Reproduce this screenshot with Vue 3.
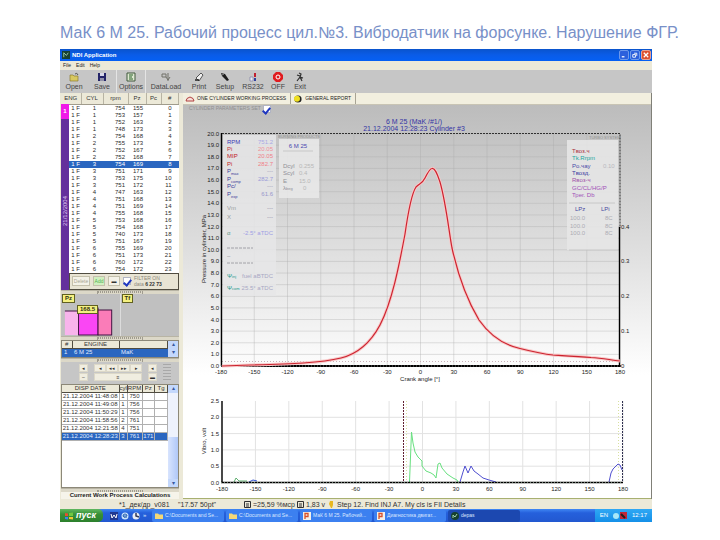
<script setup>
import { ref } from 'vue'

const rpm = [754, 753, 752, 748, 754, 755, 752, 752, 754, 751, 753, 751, 747, 751, 751, 755, 753, 754, 740, 751, 755, 751, 760, 754]
const pz = [155, 157, 163, 173, 168, 173, 167, 168, 169, 171, 175, 172, 163, 168, 169, 168, 168, 168, 173, 167, 169, 173, 172, 172]
const cycles = rpm.map((r, i) => ({ id: i, cyl: Math.floor(i / 4) + 1, rpm: r, pz: pz[i] }))
const selectedCycle = ref(8)

const records = [
  { date: '21.12.2004 11:48:08', cyl: 1, rpm: 750 },
  { date: '21.12.2004 11:49:08', cyl: 1, rpm: 756 },
  { date: '21.12.2004 11:50:29', cyl: 1, rpm: 756 },
  { date: '21.12.2004 11:58:56', cyl: 2, rpm: 761 },
  { date: '21.12.2004 12:21:58', cyl: 4, rpm: 751 },
  { date: '21.12.2004 12:28:23', cyl: 3, rpm: 761, p: '171' },
]
const selectedRecord = ref(5)

const tools = ['Open', 'Save', 'Options', 'DataLoad', 'Print', 'Setup', 'RS232', 'OFF', 'Exit']
const tasks = ['C:\\Documents and Se...', 'C:\\Documents and Se...', 'МаК 6 М 25. Рабочий...', 'Диагностика двигат...', 'depas']

const showLegend = ref(true)
const filterOn = ref(true)

const degrees = Array.from({ length: 13 }, (_, i) => -180 + i * 30)
const topX = (d) => 220 + ((d + 180) / 360) * 399
const lowX = (d) => 221 + ((d + 180) / 360) * 401
const pressures = Array.from({ length: 21 }, (_, i) => i)
const topY = (p) => 366 - p * 11.62
const volts = [0, 0.5, 1, 1.5, 2, 2.5]
const lowY = (v) => 482.5 - v * 32.6

const left = [
  { n: 'RPM', v: '751.2', y: 144, c: '#3a3ab4', k: '#a8a8e4' },
  { n: 'Pi', v: '20.05', y: 151, c: '#c03040', k: '#f09098' },
  { n: 'MIP', v: '20.05', y: 158, c: '#c01828', k: '#f08088' },
  { n: 'Pi', v: '282.7', y: 166, c: '#c01828', k: '#f08088' },
  { n: 'P', s: 'max', v: '---', y: 173, c: '#3a3a9a', k: '#a0a0b8' },
  { n: 'P', s: 'comp', v: '282.7', y: 181, c: '#3a3a9a', k: '#9c9cd8' },
  { n: 'Pc/', v: '---', y: 188, c: '#3a3a9a', k: '#a0a0b8' },
  { n: 'P', s: 'exp', v: '61.6', y: 196, c: '#3a3a9a', k: '#9898cc' },
  { n: 'Vm', v: '---', y: 210, c: '#98a0a0', k: '#9090a8' },
  { n: 'X', v: '---', y: 219, c: '#98a0a0', k: '#9090a8' },
  { n: 'α', v: '-2.5° aTDC', y: 235, c: '#609888', k: '#a0a0e4' },
]
const right = [
  { t: 'Tвоз.ч', y: 153, c: '#a83040' },
  { t: 'Tk.Rrpm', y: 160, c: '#20a8a0' },
  { t: 'Po.чау', y: 168, c: '#4848a8' },
  { t: 'Tвозд.', y: 175, c: '#3a3aa0' },
  { t: 'Rвоз-ч', y: 182, c: '#a050a8' },
  { t: 'GC/CL/HG/P', y: 190, c: '#a050b8' },
  { t: 'Трег. Db', y: 197, c: '#a050b8' },
]
</script>

<template>
  <main class="slide">
    <h1>МаК 6 М 25. Рабочий процесс цил.№3. Вибродатчик на форсунке. Нарушение ФГР.</h1>

    <section class="screen">
      <header class="titlebar">
        <svg class="appicon" viewBox="0 0 9 9"><rect width="9" height="9" fill="#17412f" /><path d="M2 7V2l3 3 2-3" stroke="#9fd0b0" fill="none" /></svg>
        <span>NDI Application</span>
        <div class="winbtns">
          <button aria-label="Minimize"><svg viewBox="0 0 9 9"><path d="M2 6.5h3" stroke="#fff" stroke-width="1.4" /></svg></button>
          <button aria-label="Restore"><svg viewBox="0 0 9 9"><path d="M3.5 2.5h3v3M2 4h3v3H2z" stroke="#fff" fill="none" /></svg></button>
          <button class="close" aria-label="Close"><svg viewBox="0 0 9 9"><path d="M2 2l5 5M7 2L2 7" stroke="#fff" stroke-width="1.4" /></svg></button>
        </div>
      </header>

      <nav class="menu">
        <a href="#file">File</a><a href="#edit">Edit</a><a href="#help">Help</a>
      </nav>

      <div class="toolbar">
        <button v-for="(t, i) in tools" :key="t" :class="{ sep: i === 2 }">
          <svg viewBox="0 0 12 10">
            <g v-if="i === 0"><path d="M2 3h3l1 1h4v5H2z" fill="#d8c860" stroke="#8c7c30" stroke-width=".7" /><path d="M7 2q2-2 3 1" stroke="#555" fill="none" /></g>
            <g v-else-if="i === 1"><path d="M2 1h8v8H2z" fill="#242468" /><path d="M4 1h4v3H4z" fill="#d8d8e8" /><path d="M4 6h4v3H4z" fill="#9090a8" /></g>
            <g v-else-if="i === 2"><path d="M2 1h8v8H2z" fill="#dde8d0" stroke="#40583c" /><path d="M4 3h4M4 5h3M4 7h4" stroke="#286028" /></g>
            <g v-else-if="i === 3"><path d="M2 2h4v3H2zM8 1v8M6 5l2 3 2-3" fill="none" stroke="#707068" /></g>
            <g v-else-if="i === 4"><path d="M3 6l5-5 2 2-4 6z" fill="#f0f0f0" stroke="#555" /><path d="M2 8h4" stroke="#222" stroke-width="1.5" /></g>
            <g v-else-if="i === 5"><path d="M2 1l4 1 4 6-2 1-5-5z" fill="#1c1c1c" /><path d="M3 3l2-1" stroke="#888" /></g>
            <g v-else-if="i === 6"><path d="M3 5h3v4H3z" fill="#e8e8f0" stroke="#7070a0" stroke-width=".6" /><path d="M8 1v4" stroke="#c02030" stroke-width="2" /><path d="M8 6v3" stroke="#3040a0" stroke-width="2" /></g>
            <g v-else-if="i === 7"><path d="M4 0h4l3 3v4l-3 3H4L1 7V3z" fill="#e01c20" /><circle cx="6" cy="5" r="2" fill="none" stroke="#fff" /></g>
            <g v-else><path d="M5 1l2 1-1 3 3 1M6 5L3 9M6 5l2 4M3 3l3 1" stroke="#303030" fill="none" stroke-width="1.2" /></g>
          </svg>
          <span>{{ t }}</span>
        </button>
      </div>

      <div class="work">
        <aside class="side">
          <div class="cyclebox">
            <div class="strip"><b>1</b><i>21/12/2004</i></div>
            <table class="cycles">
              <thead><tr><th>ENG</th><th>CYL</th><th>rpm</th><th>Pz</th><th>Pc</th><th>#</th></tr></thead>
              <tbody>
                <tr v-for="c in cycles" :key="c.id" :class="{ on: c.id === selectedCycle }" @click="selectedCycle = c.id">
                  <td>1 F</td><td>{{ c.cyl }}</td><td>{{ c.rpm }}</td><td>{{ c.pz }}</td><td></td><td>{{ c.id }}</td>
                </tr>
              </tbody>
            </table>
            <div class="filter">
              <button class="pale">Delete</button>
              <button class="green">Add</button>
              <button>▬</button>
              <label><input v-model="filterOn" type="checkbox" /><span>FILTER ON<br />data <b>6 22 73</b></span></label>
            </div>
          </div>
          <div class="grip"><i></i></div>

          <div class="bars">
            <div class="cell">
              <b class="tag">Pz</b>
              <svg viewBox="0 0 60 42" preserveAspectRatio="none">
                <rect x="4" y="17" width="14" height="24" fill="#f8b4ec" />
                <rect x="18" y="14" width="20" height="27" fill="#fa46f4" stroke="#401040" />
                <rect x="38" y="16" width="14" height="25" fill="#fa7cb8" stroke="#401040" />
                <path d="M4 17h14" stroke="#401040" />
              </svg>
              <b class="tag mean">168.5</b>
            </div>
            <div class="cell"><b class="tag">Tf</b></div>
          </div>
          <div class="grip"><i></i></div>

          <div class="listrow">
            <table class="engines">
              <thead><tr><th>#</th><th>ENGINE</th><th></th></tr></thead>
              <tbody><tr class="on"><td>1</td><td>6 M 25</td><td>MaK</td></tr></tbody>
            </table>
            <div class="scroll"><button aria-label="Up">▴</button><button aria-label="Down">▾</button></div>
          </div>
          <div class="grip"><i></i></div>

          <div class="player">
            <div class="stack"><button>◂</button><button>–</button></div>
            <div class="center">
              <div class="keys"><button>◂</button><button>◂◂</button><button>▸▸</button><button>▸</button></div>
              <button class="wide">≡</button>
            </div>
            <div class="stack"><button>◂</button><button>▬</button></div>
            <div class="hatch"></div>
          </div>

          <div class="listrow recbox">
            <table class="records">
              <thead><tr><th>DISP DATE</th><th>cyl</th><th>RPM</th><th>Pz</th><th>Tg</th></tr></thead>
              <tbody>
                <tr v-for="(r, i) in records" :key="r.date" :class="{ on: i === selectedRecord }" @click="selectedRecord = i">
                  <td>{{ r.date }}</td><td>{{ r.cyl }}</td><td>{{ r.rpm }}</td><td>{{ r.p }}</td><td></td>
                </tr>
              </tbody>
            </table>
            <div class="scroll"><button aria-label="Up">▴</button><span class="thumb"></span><button aria-label="Down">▾</button></div>
          </div>
          <div class="grip"><i></i></div>
          <div class="caption">Current Work Process Calculations</div>
        </aside>

        <section class="content">
          <div class="tabs">
            <button class="active">
              <svg viewBox="0 0 10 8"><path d="M1 6q0-3 4-4 4 1 4 4z" fill="#f8e0d8" stroke="#b04040" /></svg>
              ONE CYLINDER WORKING PROCESS
            </button>
            <button>
              <svg viewBox="0 0 10 8"><circle cx="5" cy="4" r="3.6" fill="#222" /><circle cx="4" cy="3.7" r="3" fill="#f0e020" /></svg>
              GENERAL REPORT
            </button>
          </div>

          <div class="pane">
            <label class="show"><span>CYLINDER PARAMETERS SET</span><input v-model="showLegend" type="checkbox" /></label>

            <svg class="plot" viewBox="182 112 468 276">
              <g class="ttl"><text x="413" y="124">6 M 25 (MaK /#1/)</text><text x="413" y="131">21.12.2004 12:28:23 Cylinder #3</text></g>
              <g stroke="#a8a8a8" stroke-opacity=".35">
                <path v-for="p in pressures" :key="p" :d="`M221 ${topY(p)}H619`" />
                <path v-for="d in degrees" :key="d" :d="`M${topX(d)} 134V366`" />
              </g>
              <g v-if="showLegend">
                <rect x="222" y="135" width="53" height="161" fill="#e6e6e8" opacity=".85" />
                <rect x="278" y="139" width="40" height="59" fill="#e8e8e8" opacity=".9" />
                <rect x="566" y="140" width="51" height="110" fill="#e6e6e6" opacity=".9" />
                <g v-for="l in left" :key="l.y" class="lg">
                  <text x="226" :y="l.y" :fill="l.c">{{ l.n }}<tspan v-if="l.s" dy="2" class="sub">{{ l.s }}</tspan></text>
                  <text x="272" :y="l.y" :fill="l.k" text-anchor="end">{{ l.v }}</text>
                </g>
                <path d="M226 248h26M226 263h26" stroke="#909098" stroke-dasharray="3 1" stroke-width=".8" />
                <g class="lg">
                  <text x="226" y="258" fill="#909098">–</text>
                  <text x="226" y="278" fill="#20988c">Ψ<tspan class="sub">inj</tspan></text><text x="272" y="278" fill="#a8a8c4" text-anchor="end">fuel aBTDC</text>
                  <text x="226" y="290" fill="#20988c">Ψ<tspan class="sub">com</tspan></text><text x="272" y="290" fill="#a8a8c4" text-anchor="end">25.5° aTDC</text>
                </g>
                <text x="277" y="138" class="tiny" fill="#909090">BURNING PRODUCTS</text>
                <g class="lg">
                  <text x="297" y="148" fill="#4848b0" text-anchor="middle">6 M 25</text>
                  <text x="282" y="168" fill="#909098">Dcyl</text><text x="298" y="168" fill="#b8b8b8">0.255</text>
                  <text x="282" y="175" fill="#909098">Scyl</text><text x="298" y="175" fill="#b8b8b8">0.4</text>
                  <text x="282" y="183" fill="#909098">E</text><text x="298" y="183" fill="#b8b8b8">15.0</text>
                  <text x="282" y="190" fill="#909098">λ<tspan class="sub">beg</tspan></text><text x="302" y="190" fill="#b8b8b8">0</text>
                </g>
                <path d="M282 151h30M568 203h46M568 250h50" stroke="#c0c0c0" stroke-width=".8" />
                <text x="588" y="139" class="tiny" fill="#909090">TURBO SYSTEM</text>
                <g class="lg">
                  <text v-for="r in right" :key="r.y" x="571" :y="r.y" :fill="r.c">{{ r.t }}</text>
                  <text x="602" y="168" fill="#b8b8c0">0.10</text>
                  <text x="574" y="211" fill="#4848a0">LPz</text><text x="600" y="211" fill="#4848a0">LPi</text>
                  <g fill="#acacb4">
                    <text x="569" y="220">100.0</text><text x="604" y="220">8C</text>
                    <text x="569" y="228">100.0</text><text x="604" y="228">8C</text>
                    <text x="569" y="235">100.0</text><text x="604" y="235">8C</text>
                  </g>
                </g>
              </g>
              <path d="M221 133.500H619V228" fill="none" stroke="#303030" stroke-dasharray="2 1" />
              <path d="M221 361.500H619" stroke="#c8b0b8" stroke-dasharray="1 2" />
              <path d="M220.500 133V366M618.500 227V366" stroke="#000" stroke-width="1.400" />
              <path d="M220 366H620" stroke="#000" stroke-width="2" />
              <path d="M220 366H620" stroke="#777" stroke-width="1" stroke-dasharray="1 2" />
              <g class="ax" text-anchor="end"><text v-for="p in pressures" :key="p" x="218" :y="topY(p) + 2">{{ p.toFixed(1) }}</text></g>
              <g class="ax" text-anchor="middle"><text v-for="d in degrees" :key="d" :x="topX(d)" y="374">{{ d }}</text></g>
              <g class="ax"><text x="620" y="368">0</text><text x="620" y="333">0.1</text><text x="620" y="298">0.2</text><text x="620" y="263">0.3</text><text x="620" y="229">0.4</text></g>
              <text class="ax" x="419" y="381" text-anchor="middle">Crank angle [°]</text>
              <text class="ax" transform="translate(205 249) rotate(-90)" text-anchor="middle">Pressure in cylinder, MPa</text>
              <path d="M221 366L250 365C290 364 320 363 340 358C360 353 371 340 379 325C391 302 398 266 404 234C408 206 411 193 415 187C419 183 421 184 424 178C427 172 429 168.500 431 168.500C434 168 436 173 439 182C445 203 448 232 451 248C457 275 466 300 478 320C490 337 503 345 519 348.500C533 352 542 354 552 355C570 356 580 356.500 590 357.500C602 358 609 360 619 361" fill="none" stroke="#f8c8c8" stroke-width="3" />
              <path d="M221 366L250 365C290 364 320 363 340 358C360 353 371 340 379 325C391 302 398 266 404 234C408 206 411 193 415 187C419 183 421 184 424 178C427 172 429 168.500 431 168.500C434 168 436 173 439 182C445 203 448 232 451 248C457 275 466 300 478 320C490 337 503 345 519 348.500C533 352 542 354 552 355C570 356 580 356.500 590 357.500C602 358 609 360 619 361" fill="none" stroke="#cc2430" stroke-width="1.200" />
            </svg>

            <svg class="plot" viewBox="182 388 468 110">
              <g stroke="#e2e2e2">
                <path v-for="v in volts.slice(1, 5)" :key="v" :d="`M221 ${lowY(v)}H621`" />
                <path v-for="d in degrees" :key="d" :d="`M${lowX(d)} 401V482`" />
              </g>
              <path d="M402.500 401V482" stroke="#602030" stroke-dasharray="2 1" />
              <path d="M405.500 401V482M617.500 401V482" stroke="#d8e0a0" stroke-dasharray="1 2" />
              <path d="M621.500 401V482" stroke="#303050" stroke-dasharray="2 1" />
              <path d="M408.500 482L410.500 432L412 443L414 452L417 457L421 461L421 466L425 471L430 473L433 475L435 478L437 464L439 463L441 468L446 474L452 478L456 480L457 482" fill="none" stroke="#68e080" />
              <path d="M459 482L462 472L464 466L467 473L470 466L473 471L477 474L482 478L488 480L495 482M608 482L610 473L612 469L614 467L617 464L619 465L621 470" fill="none" stroke="#5050d0" />
              <path d="M233 482l2-4 3 3h8" fill="none" stroke="#60b070" />
              <path d="M248 482l4-2 4 1" fill="none" stroke="#3050d0" />
              <path d="M221 401V483" stroke="#000" stroke-width="1.400" />
              <path d="M220 482.500H622" stroke="#000" stroke-width="1.600" />
              <path d="M220 482.500H622" stroke="#708070" stroke-dasharray="1 2" />
              <g class="ax" text-anchor="end"><text v-for="v in volts" :key="v" x="218" :y="lowY(v) + 2">{{ v.toFixed(1) }}</text></g>
              <g class="ax" text-anchor="middle"><text v-for="d in degrees" :key="d" :x="lowX(d)" y="491">{{ d }}</text></g>
              <text class="ax" transform="translate(205 441) rotate(-90)" text-anchor="middle">Vibro, volt</text>
            </svg>
          </div>
        </section>
      </div>

      <div class="status">
        <span class="s1">*1_дек/др_v081</span>
        <span class="s2">"17.57 50pt"</span>
        <span class="s3"><svg viewBox="0 0 7 7"><path d="M.5.5h6v6h-6zM2 3h3M2 5h3" fill="none" stroke="#303030" /></svg>=25,59 %мср</span>
        <span class="s4"><svg viewBox="0 0 7 7"><path d="M.5.5h6v6h-6zM2 3h3M2 5h3" fill="none" stroke="#303030" /></svg>1,83 v</span>
        <span><svg viewBox="0 0 7 7"><path d="M2 0h3v4l-1 3H3L1 3z" fill="#e8b820" /></svg>Step 12. Find INJ A7. My cls is FII Details</span>
      </div>

      <footer class="taskbar">
        <button class="start">
          <svg viewBox="0 0 8 8"><path d="M0 1l3 .5v2.500H0z" fill="#e85030" /><path d="M4 1l4-.5v3.500H4z" fill="#70c840" /><path d="M0 5h3v2.500L0 7z" fill="#4080f0" /><path d="M4 5h4v2.500L4 7z" fill="#f0c830" /></svg>
          пуск
        </button>
        <div class="quick">
          <svg viewBox="0 0 8 8"><rect width="8" height="8" fill="#203890" /><path d="M1 2l1 4 2-3 2 3 1-4" stroke="#fff" fill="none" /></svg>
          <svg viewBox="0 0 8 8"><circle cx="4" cy="4" r="3.500" fill="#cce4fc" /><path d="M2 4h4q0-2-2-2T2 4t4 1" stroke="#2860b0" fill="none" /></svg>
          <svg viewBox="0 0 8 8"><circle cx="4" cy="4" r="3.500" fill="#e8ecf4" /><path d="M4 1v3l3 1" stroke="#303858" fill="none" stroke-width="1.500" /></svg>
          <span>»</span>
        </div>
        <button v-for="(t, i) in tasks" :key="i" class="task" :class="{ cur: i === 4 }">
          <svg viewBox="0 0 8 8">
            <path v-if="i < 2" d="M0 1.500h3l1 1h4V7H0z" fill="#f4d878" />
            <g v-else-if="i < 4"><rect width="8" height="8" fill="#f4f0e8" /><path d="M2 7V1.500h3v3H2" stroke="#d85028" fill="none" stroke-width="1.300" /></g>
            <g v-else><circle cx="4" cy="4" r="4" fill="#17412f" /><path d="M2 6V3l2 2 2-3" stroke="#9fd0b0" fill="none" /></g>
          </svg>
          <span>{{ t }}</span>
        </button>
        <div class="tray">
          <span>EN</span>
          <svg viewBox="0 0 16 8"><circle cx="4" cy="4" r="3" fill="#a8e8f8" /><path d="M8 0h7v7H8z" fill="#c02838" /><path d="M9 2l4 4" stroke="#202020" stroke-width="2" /></svg>
          <time>12:17</time>
        </div>
      </footer>
    </section>
  </main>
</template>

<style>
body { margin: 0; background: #fff; }
</style>

<style scoped>
* { box-sizing: border-box; }
.slide { padding: 23px 68px 18px 60px; font: 6px/7px "Liberation Sans", Arial, sans-serif; color: #333; }
h1 { margin: 0; font-size: 16px; line-height: 20px; font-weight: 400; color: #7890c8; white-space: nowrap; }
button { font: inherit; color: inherit; margin: 0; padding: 0; border: 0; background: none; white-space: nowrap; }
svg { display: block; }
table { border-collapse: collapse; table-layout: fixed; width: 100%; }
th, td { padding: 0; overflow: hidden; white-space: nowrap; }
th { font-weight: 400; background: #ece9d8; }
.screen { margin-top: 6px; background: #ece9d8; }

.titlebar { display: flex; align-items: center; gap: 2px; height: 12px; padding-left: 2px; color: #fff; font-weight: 700; background: linear-gradient(#0a54cc, #0a5ce8 50%, #0560f4); }
.appicon { width: 8px; height: 8px; }
.winbtns { margin-left: auto; display: flex; gap: 1px; padding-right: 1px; }
.winbtns button { width: 10px; height: 10px; border: 1px solid #6c98ec; border-radius: 2px; background: #2c60dc; }
.winbtns .close { background: #dc5030; border-color: #e8a090; }

.menu { display: flex; gap: 5px; height: 9px; padding: 1px 3px; font-size: 5px; }
.menu a { color: #222; text-decoration: none; }

.toolbar { display: grid; grid-template-columns: 28px 28px 30px 40px 26px 26px 30px 20px 24px; height: 23px; background: #c6c6c6; font-size: 7px; line-height: 8px; color: #444; }
.toolbar button { display: flex; flex-direction: column; align-items: center; gap: 1px; padding-top: 2px; }
.toolbar svg { width: 12px; height: 10px; }
.toolbar .sep { border-left: 1px solid #e4e4e4; border-right: 1px solid #e4e4e4; }

.work { display: grid; grid-template-columns: 118px 1fr; gap: 4px; padding-left: 1px; }
.side { display: flex; flex-direction: column; min-width: 0; }

.cyclebox { display: grid; grid-template-columns: 8px 1fr; background: #fff; }
.cycles { grid-column: 1 / 3; grid-row: 1; }
.cycles th { height: 11px; border-right: 1px solid #b8b4a4; border-bottom: 1px solid #a09c8c; color: #333; }
.cycles td { height: 7px; line-height: 7px; text-align: right; padding-right: 7px; color: #2c2c2c; }
.cycles th:nth-child(1) { width: 20px; }
.cycles th:nth-child(2) { width: 22px; }
.cycles th:nth-child(3) { width: 25px; }
.cycles th:nth-child(4) { width: 18px; }
.cycles th:nth-child(5) { width: 15px; }
.cycles td:nth-child(1) { padding-right: 1px; }
.cycles td:nth-child(3), .cycles td:nth-child(4) { padding-right: 3px; }
.on td { background: #2a66c0; color: #e0ecff; }
.cycles .on td { color: #fff; }
.strip { grid-column: 1; grid-row: 1 / 3; z-index: 1; margin-top: 11px; display: flex; flex-direction: column; background: #64309c; color: #e0c8f4; }
.strip b { height: 15px; padding-top: 4px; background: #f018e8; text-align: center; color: #fff; }
.strip i { writing-mode: vertical-rl; transform: rotate(180deg); font-style: normal; margin: auto 0 63px; line-height: 8px; }
.filter { grid-column: 2; display: flex; align-items: center; gap: 3px; height: 17px; padding: 0 2px; border: 1px solid #504c40; background: #e8e4d4; font-size: 5px; line-height: 6px; }
.filter button { width: 12px; height: 10px; border: 1px solid #c4c0ac; background: #f4f2e8; }
.filter .pale { width: 18px; color: #a8a494; }
.filter .green { background: #d0f0c0; color: #50b050; }
.filter label { display: flex; align-items: center; gap: 3px; color: #8c887c; }
.filter b { color: #333; }
input[type="checkbox"] { appearance: none; display: grid; place-items: center; flex: none; margin: 0; width: 8px; height: 8px; background: #fff; border: 1px solid #b0b4c4; }
input[type="checkbox"]:checked::before { content: ""; width: 3px; height: 6px; border: solid #2038c0; border-width: 0 2px 2px 0; transform: rotate(40deg); }

.grip { height: 4px; display: flex; align-items: center; justify-content: center; background: #dcd8c8; border-top: 1px solid #b8b4a4; }
.grip i { width: 46px; height: 2px; border: 1px dotted #a09c90; }

.bars { display: grid; grid-template-columns: 1fr 1fr; gap: 1px; height: 42px; background: #dcdcdc; }
.cell { position: relative; background: #c0c0c0; }
.cell svg { width: 100%; height: 42px; }
.tag { position: absolute; left: 1px; top: 0; padding: 0 2px; border: 1px solid #606020; background: #f4f080; color: #303010; }
.mean { left: 16px; top: 11px; }

.listrow { display: flex; border: 1px solid #8c8878; background: #fff; }
.scroll { width: 10px; flex: none; display: flex; flex-direction: column; justify-content: space-between; background: #eef2fc; }
.scroll button { height: 8px; background: #c4d8fc; color: #3858a0; }
.thumb { flex: 1; margin-top: 44px; background: linear-gradient(90deg, #d8e4fe, #b0c8f8); }
.engines th, .records th { height: 8px; border-right: 1px solid #504c40; border-bottom: 1px solid #504c40; color: #333; }
.engines th:nth-child(1) { width: 10px; }
.engines th:nth-child(2) { width: 47px; }
.engines td { height: 8px; padding-left: 2px; }

.player { display: flex; align-items: center; justify-content: flex-end; gap: 6px; height: 22px; padding: 0 8px; background: #c6c6c6; font-size: 5px; line-height: 7px; }
.player button { height: 8px; background: #f0ede0; border: 1px solid #dcd8c8; line-height: 6px; }
.stack { display: flex; flex-direction: column; gap: 1px; }
.stack button { width: 9px; }
.center { display: flex; flex-direction: column; gap: 1px; }
.keys { display: flex; }
.keys button { width: 12px; }
.hatch { width: 8px; height: 18px; background: repeating-linear-gradient(#a8a8a8 0 1px, #c8c8c8 1px 3px); }

.recbox { flex: 1; align-items: flex-start; }
.recbox .scroll { align-self: stretch; }
.records th:nth-child(1) { width: 57px; }
.records th:nth-child(2) { width: 8px; }
.records th:nth-child(3) { width: 15px; }
.records td { height: 8px; border-right: 1px solid #b0b0b0; border-bottom: 1px solid #b0b0b0; text-align: center; }
.caption { height: 7px; background: #f6f4ea; color: #222; font-weight: 700; text-align: center; white-space: nowrap; overflow: hidden; }

.content { min-width: 0; border-right: 1px solid #808078; }
.tabs { display: flex; height: 12px; background: #f2efdf; border-bottom: 1px solid #c8c4b4; font-size: 5px; }
.tabs button { display: flex; align-items: center; gap: 2px; padding: 0 4px 0 2px; border-right: 1px solid #a8a494; color: #222; }
.tabs svg { width: 10px; height: 8px; }
.pane { background: linear-gradient(#bcbcbc, #e0e0e0 150px, #fff 270px); border-bottom: 1px solid #a8b070; }
.show { display: flex; align-items: center; gap: 2px; height: 7px; padding-left: 6px; color: #909090; font-size: 5px; }
.plot { width: 100%; height: auto; }
.ttl { font-size: 7px; fill: #3434a4; text-anchor: middle; }
.ax { font-size: 6px; fill: #222; }
.lg { font-size: 6px; }
.sub { font-size: 4px; }
.tiny { font-size: 4px; }

.status { display: flex; align-items: center; height: 10px; padding-left: 59px; font-size: 7px; color: #333; white-space: nowrap; }
.status span { display: flex; align-items: center; gap: 2px; }
.status svg { width: 7px; height: 7px; }
.s1 { width: 59px; }
.s2 { width: 66px; }
.s3 { width: 53px; }
.s4 { width: 31px; }

.taskbar { display: flex; align-items: center; height: 13px; background: linear-gradient(#4088f4, #2560dc 30%, #2258d0); color: #dce8ff; }
.start { display: flex; align-items: center; gap: 3px; width: 43px; height: 13px; padding-left: 5px; border-radius: 0 5px 5px 0; background: linear-gradient(#60b860, #389038 40%, #2c802c); color: #fff; font-weight: 700; font-style: italic; font-size: 9px; }
.start svg, .quick svg, .task svg { width: 8px; height: 8px; flex: none; }
.quick { display: flex; align-items: center; gap: 3px; width: 49px; padding-left: 7px; }
.task { flex: 0 1 72px; display: flex; align-items: center; gap: 2px; height: 12px; margin-right: 2px; padding: 0 3px; border-radius: 2px; background: #3c80f0; font-size: 5px; }
.task.cur { background: #1c48b0; }
.tray { margin-left: auto; display: flex; align-items: center; gap: 4px; height: 13px; padding: 0 5px; background: linear-gradient(#30a8f4, #1490e8); color: #fff; }
.tray svg { width: 16px; height: 8px; }
</style>
